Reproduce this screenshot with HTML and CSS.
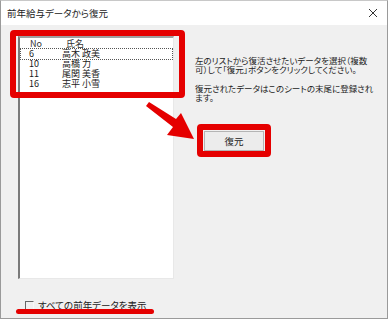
FILE: index.html
```html
<!DOCTYPE html>
<html lang="ja">

<head>
    <meta charset="UTF-8">
    <meta name="viewport" content="width=device-width, initial-scale=1.0">
    <title>前年給与データから復元</title>
    <link rel="stylesheet" href="styles.css">
</head>

<body>
    <div class="dialog">
        <div class="title-bar">
            <span class="title">前年給与データから復元</span>
            <svg class="close" width="10" height="10" viewBox="0 0 10 10">
                <path d="M1 1 L9 9 M9 1 L1 9" stroke="#333" stroke-width="1" fill="none" />
            </svg>
        </div>

        <div class="content">
            <div class="list-box">
                <div class="list-head">
                    <span class="col-no">No</span>
                    <span class="col-name">氏名</span>
                </div>
                <div class="list-row focused">
                    <span class="col-no">6</span>
                    <span class="col-name">高木 政美</span>
                </div>
                <div class="list-row">
                    <span class="col-no">10</span>
                    <span class="col-name">高橋 力</span>
                </div>
                <div class="list-row">
                    <span class="col-no">11</span>
                    <span class="col-name">尾関 美香</span>
                </div>
                <div class="list-row">
                    <span class="col-no">16</span>
                    <span class="col-name">志平 小雪</span>
                </div>
            </div>

            <div class="side">
                <p class="note">左のリストから復活させたいデータを選択（複数<br>可）して「復元」ボタンをクリックしてください。</p>
                <p class="note">復元されたデータはこのシートの末尾に登録され<br>ます。</p>
                <button class="restore-btn">復元</button>
            </div>
        </div>

        <label class="show-all">
            <span class="check"></span>
            <span>すべての前年データを表示</span>
        </label>

        <!-- red annotations drawn over the dialog -->
        <div class="mark mark-list"></div>
        <div class="mark mark-btn"></div>
        <div class="mark-line"></div>
        <svg class="arrow" width="60" height="45" viewBox="0 0 60 45">
            <path d="M4 6 L7 2 L34 19 L39 13 L52 39 L25 35 L31 27 Z" fill="#e50000" />
        </svg>
    </div>
</body>

</html>
```

FILE: styles.css
```css
* {
    margin: 0;
    padding: 0;
    box-sizing: border-box;
}

body {
    background: #fff;
    font-family: "Noto Sans CJK JP", "Noto Sans", sans-serif;
    font-feature-settings: "palt";
    color: #1a1a1a;
}

.dialog {
    position: relative;
    width: 388px;
    height: 319px;
    background: #f0f0f0;
    border: 1px solid #9a9a9a;
    border-top-color: #c8c8c8;
}

.title-bar {
    height: 24px;
    background: #fff;
    display: flex;
    align-items: center;
    justify-content: space-between;
    padding: 0 9px 0 6px;
}

.title {
    font-size: 9.5px;
    color: #222;
}

.close {
    display: block;
}

.content {
    display: flex;
    padding: 11px 0 0 17px;
}

.list-box {
    width: 156px;
    height: 243px;
    background: #fff;
    border-top: 2px solid #a0a0a0;
    border-left: 2px solid #7a7a7a;
    border-right: 1px solid #e8e8e8;
    border-bottom: 1px solid #e8e8e8;
    font-size: 9px;
}

.list-head {
    height: 11px;
    line-height: 11px;
    display: flex;
    color: #333;
}

.list-head .col-no {
    padding-left: 10px;
}

.list-head .col-name {
    padding-left: 5px;
}

.list-row {
    height: 10px;
    line-height: 10px;
    display: flex;
    margin: 0 1px;
}

.list-row.focused {
    outline: 1px dotted #555;
}

.col-no {
    width: 41px;
    padding-left: 8px;
}

.side {
    margin-left: 21px;
    padding-top: 20px;
    display: flex;
    flex-direction: column;
    align-items: flex-start;
}

.note {
    font-size: 8.5px;
    line-height: 9px;
    white-space: nowrap;
    margin-bottom: 10px;
    color: #222;
}

.restore-btn {
    margin: 19px 0 0 9px;
    width: 60px;
    height: 20px;
    background: #ececec;
    border: 1px solid #b4b4b4;
    font-family: inherit;
    font-feature-settings: "palt";
    font-size: 9.5px;
    color: #222;
}

.show-all {
    display: flex;
    align-items: center;
    gap: 4px;
    margin: 21px 0 0 24px;
    font-size: 9.5px;
    line-height: 11px;
    color: #222;
}

.check {
    width: 9px;
    height: 9px;
    border-top: 1px solid #666;
    border-left: 1px solid #666;
    border-right: 1px solid #f8f8f8;
    border-bottom: 1px solid #f8f8f8;
}

.mark {
    position: absolute;
    border: 6px solid #e50000;
    border-radius: 4px;
}

.mark-list {
    left: 9px;
    top: 29px;
    width: 175px;
    height: 68px;
}

.mark-btn {
    left: 196px;
    top: 123px;
    width: 74px;
    height: 33px;
}

.mark-line {
    position: absolute;
    left: 15px;
    top: 308px;
    width: 138px;
    height: 5px;
    background: #e50000;
    border-radius: 3px;
}

.arrow {
    position: absolute;
    left: 141px;
    top: 99px;
}
```
